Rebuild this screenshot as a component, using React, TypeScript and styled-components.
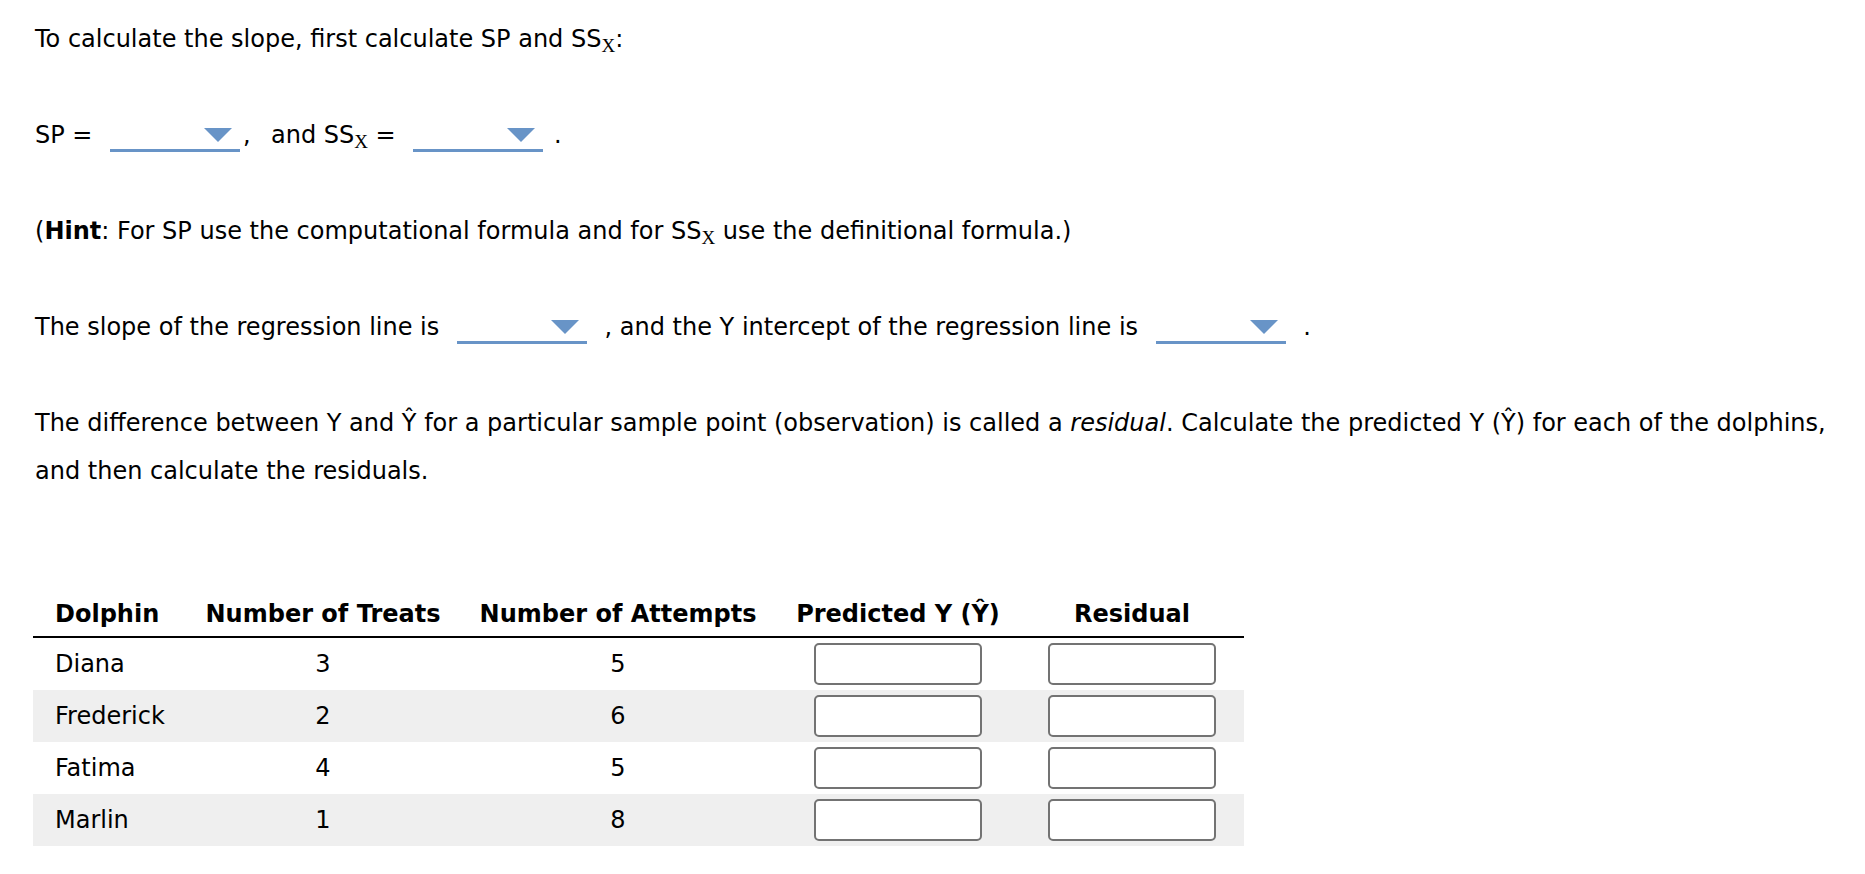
import React from "react";
import styled, { createGlobalStyle } from "styled-components";

const GlobalStyle = createGlobalStyle`
  html, body {
    margin: 0;
    padding: 0;
    background: #ffffff;
  }
  body {
    font-family: "DejaVu Sans", Verdana, sans-serif;
    font-size: 24px;
    color: #000000;
  }
`;

const Page = styled.div`
  padding: 15px 0 0 33px;
  line-height: 48px;
`;

const Para = styled.p`
  margin: 0 0 48px 2px;
  white-space: nowrap;
`;

const Sub = styled.span`
  font-family: "Liberation Serif", "Times New Roman", serif;
  font-size: 19px;
  line-height: 1;
  vertical-align: -5px;
`;

const Comma = styled.span`
  margin-right: 5px;
`;

const Dropdown = styled.span<{ $after: number }>`
  display: inline-block;
  box-sizing: border-box;
  width: 130px;
  height: 28px;
  margin: 0 ${(p) => p.$after}px 0 10px;
  padding: 4px 8px 7px 0;
  border-bottom: 3px solid #6894c7;
  vertical-align: -9px;
  cursor: pointer;
`;

const Caret = styled.svg`
  display: block;
  margin-left: auto;
`;

const Table = styled.div`
  margin-top: 98px;
  width: 1211px;
`;

const Row = styled.div<{ $shade?: boolean }>`
  display: grid;
  grid-template-columns: 142px 296px 294px 266px 202px;
  align-items: center;
  height: 52px;
  background: ${(p) => (p.$shade ? "#efefef" : "transparent")};
`;

const HeadRow = styled(Row)`
  box-sizing: border-box;
  height: 45px;
  border-bottom: 2px solid #000000;
  font-weight: bold;
`;

const Cell = styled.div<{ $left?: boolean }>`
  text-align: ${(p) => (p.$left ? "left" : "center")};
  padding-left: ${(p) => (p.$left ? "22px" : "0")};
  line-height: 1.2;
  white-space: nowrap;
`;

const InputCell = styled.div`
  display: flex;
  justify-content: center;
`;

const Box = styled.input`
  box-sizing: border-box;
  width: 168px;
  height: 42px;
  border: 2px solid #737373;
  border-radius: 5px;
  background: #ffffff;
  font: inherit;
  padding: 0 8px;
  outline: none;
`;

const Select = ({ after = 10 }: { after?: number }) => (
  <Dropdown $after={after}>
    <Caret width="28" height="14" viewBox="0 0 28 14">
      <polygon points="0,0 28,0 14,14" fill="#6894c7" />
    </Caret>
  </Dropdown>
);

const SSx = () => (
  <>
    SS<Sub>X</Sub>
  </>
);

const rows = [
  { name: "Diana", treats: 3, attempts: 5 },
  { name: "Frederick", treats: 2, attempts: 6 },
  { name: "Fatima", treats: 4, attempts: 5 },
  { name: "Marlin", treats: 1, attempts: 8 },
];

export default function App() {
  return (
    <>
      <GlobalStyle />
      <Page>
        <Para>
          To calculate the slope, first calculate SP and <SSx />:
        </Para>
        <Para>
          SP = <Select after={3} />
          <Comma>,</Comma>&nbsp; and <SSx /> = <Select after={3} /> .
        </Para>
        <Para>
          (<b>Hint</b>: For SP use the computational formula and for <SSx /> use the
          definitional formula.)
        </Para>
        <Para>
          The slope of the regression line is <Select /> , and the Y intercept of the
          regression line is <Select /> .
        </Para>
        <Para>
          The difference between Y and Ŷ for a particular sample point (observation) is
          called a <i>residual</i>. Calculate the predicted Y (Ŷ) for each of the dolphins,
          <br />
          and then calculate the residuals.
        </Para>

        <Table>
          <HeadRow>
            <Cell $left>Dolphin</Cell>
            <Cell>Number of Treats</Cell>
            <Cell>Number of Attempts</Cell>
            <Cell>Predicted Y (Ŷ)</Cell>
            <Cell>Residual</Cell>
          </HeadRow>
          {rows.map((r, i) => (
            <Row key={r.name} $shade={i % 2 === 1}>
              <Cell $left>{r.name}</Cell>
              <Cell>{r.treats}</Cell>
              <Cell>{r.attempts}</Cell>
              <InputCell>
                <Box type="text" aria-label={`Predicted Y for ${r.name}`} />
              </InputCell>
              <InputCell>
                <Box type="text" aria-label={`Residual for ${r.name}`} />
              </InputCell>
            </Row>
          ))}
        </Table>
      </Page>
    </>
  );
}
